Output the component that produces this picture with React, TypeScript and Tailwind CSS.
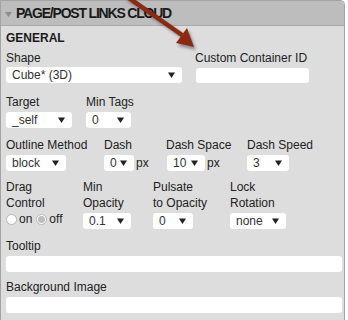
function Caret() {
  return (
    <svg width="7" height="6" viewBox="0 0 7 6" className="shrink-0">
      <path d="M0 0.5h7L3.5 6z" fill="#222" />
    </svg>
  );
}

function Select({ value, w }: { value: string; w: string }) {
  return (
    <div
      className={`${w} flex h-[16px] shrink-0 items-center justify-between rounded-[3px] bg-white pl-[6px] pr-[7px] text-[12px] leading-none text-[#333]`}
    >
      <span>{value}</span>
      <Caret />
    </div>
  );
}

function Label({ children }: { children: React.ReactNode }) {
  return <div className="text-[12px] leading-[16px] text-[#222]">{children}</div>;
}

function Radio({ checked }: { checked?: boolean }) {
  return (
    <span className="flex h-[11px] w-[11px] items-center justify-center rounded-full border border-[#b5b5b5] bg-white">
      {checked && <span className="h-[7px] w-[7px] rounded-full bg-[#bdbdbd]" />}
    </span>
  );
}

export default function App() {
  return (
    <div
      className="relative h-[320px] w-[348px] overflow-hidden bg-white"
      style={{ fontFamily: '"Liberation Sans", Arial, sans-serif' }}
    >
      <div className="flex h-[320px] w-[345px] flex-col overflow-hidden rounded-tr-[5px] border-x border-t border-[#a3a3a3]">
        <div className="flex h-[25px] shrink-0 items-center border-b border-[#a8a8a8] bg-[#bdbdbd] pl-[4px]">
          <svg width="7" height="5" viewBox="0 0 7 5" className="mr-[4px] mt-[2px]">
            <path d="M0 0h7L3.5 5z" fill="#8c8c8c" />
          </svg>
          <span className="text-[14px] font-bold tracking-[-1.2px] text-[#1a1a1a]">
            PAGE/POST LINKS CLOUD
          </span>
        </div>

        <div className="flex flex-1 flex-col bg-[#dddddd] pl-[5px] pt-[4px]">
          <div className="text-[12px] font-bold leading-[16px] text-[#1a1a1a]">GENERAL</div>

          <div className="mt-[4px] flex">
            <div className="w-[189px]">
              <Label>Shape</Label>
              <div className="mt-px">
                <Select value="Cube* (3D)" w="w-[176px]" />
              </div>
            </div>
            <div>
              <Label>Custom Container ID</Label>
              <div className="ml-px mt-[2px] h-[15px] w-[113px] rounded-[3px] bg-white" />
            </div>
          </div>

          <div className="mt-[11px] flex">
            <div className="w-[80px]">
              <Label>Target</Label>
              <div className="mt-[2px]">
                <Select value="_self" w="w-[66px]" />
              </div>
            </div>
            <div>
              <Label>Min Tags</Label>
              <div className="mt-[2px]">
                <Select value="0" w="w-[45px]" />
              </div>
            </div>
          </div>

          <div className="mt-[9px] flex">
            <div className="w-[98px]">
              <Label>Outline Method</Label>
              <div className="mt-[2px]">
                <Select value="block" w="w-[60px]" />
              </div>
            </div>
            <div className="w-[62px]">
              <Label>Dash</Label>
              <div className="mt-[2px] flex items-center gap-[2px]">
                <Select value="0" w="w-[30px]" />
                <span className="text-[12px] leading-none text-[#222]">px</span>
              </div>
            </div>
            <div className="w-[81px]">
              <Label>Dash Space</Label>
              <div className="mt-[2px] flex items-center gap-[2px] pl-px">
                <Select value="10" w="w-[38px]" />
                <span className="text-[12px] leading-none text-[#222]">px</span>
              </div>
            </div>
            <div>
              <Label>Dash Speed</Label>
              <div className="mt-[2px]">
                <Select value="3" w="w-[42px]" />
              </div>
            </div>
          </div>

          <div className="mt-[8px] flex">
            <div className="w-[77px]">
              <Label>
                Drag
                <br />
                Control
              </Label>
              <div className="mt-[2px] flex items-center text-[12px] leading-none text-[#222]">
                <Radio />
                <span className="ml-[2px] mr-[4px]">on</span>
                <Radio checked />
                <span className="ml-[2px]">off</span>
              </div>
            </div>
            <div className="w-[70px]">
              <Label>
                Min
                <br />
                Opacity
              </Label>
              <div className="mt-[2px]">
                <Select value="0.1" w="w-[48px]" />
              </div>
            </div>
            <div className="w-[77px]">
              <Label>
                Pulsate
                <br />
                to Opacity
              </Label>
              <div className="mt-[2px]">
                <Select value="0" w="w-[40px]" />
              </div>
            </div>
            <div>
              <Label>
                Lock
                <br />
                Rotation
              </Label>
              <div className="mt-[2px]">
                <Select value="none" w="w-[56px]" />
              </div>
            </div>
          </div>

          <div className="mt-[9px]">
            <Label>Tooltip</Label>
            <div className="mt-[2px] h-[16px] w-[336px] rounded-[3px] bg-white" />
          </div>

          <div className="mt-[7px]">
            <Label>Background Image</Label>
            <div className="mt-[2px] h-[16px] w-[336px] rounded-[3px] bg-white" />
          </div>
        </div>
      </div>

      <svg
        className="pointer-events-none absolute left-0 top-0"
        width="348"
        height="60"
        viewBox="0 0 348 60"
      >
        <defs>
          <filter id="sh" x="-20%" y="-20%" width="140%" height="140%">
            <feGaussianBlur stdDeviation="1.5" />
          </filter>
        </defs>
        <g transform="translate(2,3)" fill="#000" opacity="0.35" filter="url(#sh)">
          <path d="M126 -4 L183 35" stroke="#000" strokeWidth="4.5" />
          <path d="M176 43 L187 28 L194 47 Z" />
        </g>
        <path d="M126 -4 L182 35" stroke="#8a2a12" strokeWidth="4.5" />
        <path d="M176 43 L187 28 L194 47 Z" fill="#8a2a12" />
      </svg>
    </div>
  );
}
